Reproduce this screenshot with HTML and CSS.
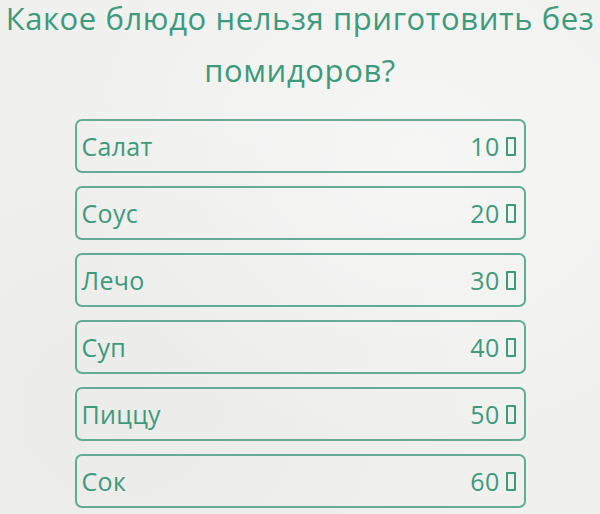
FILE: index.html
```html
<!DOCTYPE html>
<html lang="ru">
<head>
    <meta charset="UTF-8">
    <meta name="viewport" content="width=device-width, initial-scale=1.0">
    <title>Вопрос</title>
    <link rel="stylesheet" href="styles.css">
</head>
<body>

    <h1 class="question">Какое блюдо нельзя приготовить без помидоров?</h1>

    <div class="answers">
        <div class="answer"><span class="name">Салат</span><span class="score">10 <i class="tofu"></i></span></div>
        <div class="answer"><span class="name">Соус</span><span class="score">20 <i class="tofu"></i></span></div>
        <div class="answer"><span class="name">Лечо</span><span class="score">30 <i class="tofu"></i></span></div>
        <div class="answer"><span class="name">Суп</span><span class="score">40 <i class="tofu"></i></span></div>
        <div class="answer"><span class="name">Пиццу</span><span class="score">50 <i class="tofu"></i></span></div>
        <div class="answer"><span class="name">Сок</span><span class="score">60 <i class="tofu"></i></span></div>
    </div>

</body>
</html>
```

FILE: styles.css
```css
body {
    margin: 0;
    font-family: 'Open Sans', sans-serif;
    color: #3d9a7b;
    background-color: #f0f0ef;
    background-image:
        radial-gradient(ellipse at 70% 30%, rgba(255, 255, 255, 0.4), transparent 60%),
        radial-gradient(ellipse at 20% 80%, rgba(228, 228, 226, 0.4), transparent 55%);
    height: 514px;
    overflow: hidden;
}
.question {
    margin: 8px 0 0;
    font-size: 31px;
    font-weight: 400;
    letter-spacing: 0.6px;
    line-height: 52px;
    text-align: center;
    text-box: trim-start cap alphabetic;
}
.answers {
    width: 451px;
    margin: 23px auto 0;
    display: flex;
    flex-direction: column;
    gap: 13px;
}
.answer {
    height: 50px;
    border: 2px solid #62ab96;
    border-radius: 7px;
    padding: 0 8px 0 5px;
    display: flex;
    align-items: center;
    justify-content: space-between;
    font-size: 25px;
    letter-spacing: 0.3px;
}
.score {
    display: flex;
    align-items: center;
    gap: 6px;
}
.tofu {
    display: inline-block;
    width: 6px;
    height: 15px;
    border: 2px solid #3d9a7b;
    border-radius: 1px;
}
```
